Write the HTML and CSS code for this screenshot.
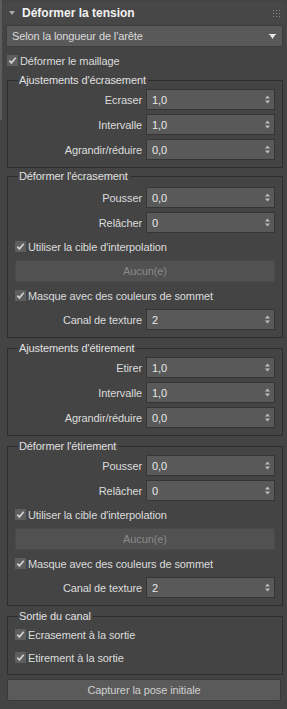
FILE: index.html
```html
<!DOCTYPE html>
<html lang="fr">
<head>
  <meta charset="UTF-8">
  <meta name="viewport" content="width=device-width, initial-scale=1.0">
  <title>Déformer la tension</title>
  <link rel="stylesheet" href="styles.css">
</head>
<body>
  <div class="scroll-thumb"></div>

  <div class="rollout-head">
    <svg class="caret" width="6" height="4" viewBox="0 0 6 4"><path d="M0 0H6L3 4Z"/></svg>
    <span class="rollout-title">Déformer la tension</span>
    <svg class="grip" width="7" height="7" viewBox="0 0 7 7">
      <rect x="0" y="0" width="1" height="1"/><rect x="3" y="0" width="1" height="1"/><rect x="6" y="0" width="1" height="1"/>
      <rect x="0" y="3" width="1" height="1"/><rect x="3" y="3" width="1" height="1"/><rect x="6" y="3" width="1" height="1"/>
      <rect x="0" y="6" width="1" height="1"/><rect x="3" y="6" width="1" height="1"/><rect x="6" y="6" width="1" height="1"/>
    </svg>
  </div>

  <div class="dropdown">
    <span>Selon la longueur de l'arête</span>
    <svg class="drop-arrow" width="7" height="5" viewBox="0 0 7 5"><path d="M0 0H7V1H6L3.5 5L1 1H0Z"/></svg>
  </div>

  <div class="check top-check">
    <svg class="box" width="11" height="11" viewBox="0 0 11 11"><rect width="11" height="11"/><path d="M2.3 5.6l2.1 2.3 4.3-5.2"/></svg>
    <span>Déformer le maillage</span>
  </div>

  <fieldset class="group">
    <legend>Ajustements d'écrasement</legend>
    <div class="field-row"><span class="field-label">Ecraser</span><div class="spinner"><span>1,0</span><svg class="spin" width="5" height="9" viewBox="0 0 5 9"><path d="M0 3.5L2.5 0.5L5 3.5ZM0 5.5H5L2.5 8.5Z"/></svg></div></div>
    <div class="field-row"><span class="field-label">Intervalle</span><div class="spinner"><span>1,0</span><svg class="spin" width="5" height="9" viewBox="0 0 5 9"><path d="M0 3.5L2.5 0.5L5 3.5ZM0 5.5H5L2.5 8.5Z"/></svg></div></div>
    <div class="field-row"><span class="field-label">Agrandir/réduire</span><div class="spinner"><span>0,0</span><svg class="spin" width="5" height="9" viewBox="0 0 5 9"><path d="M0 3.5L2.5 0.5L5 3.5ZM0 5.5H5L2.5 8.5Z"/></svg></div></div>
  </fieldset>

  <fieldset class="group group-tight">
    <legend>Déformer l'écrasement</legend>
    <div class="field-row"><span class="field-label">Pousser</span><div class="spinner"><span>0,0</span><svg class="spin" width="5" height="9" viewBox="0 0 5 9"><path d="M0 3.5L2.5 0.5L5 3.5ZM0 5.5H5L2.5 8.5Z"/></svg></div></div>
    <div class="field-row"><span class="field-label">Relâcher</span><div class="spinner"><span>0</span><svg class="spin" width="5" height="9" viewBox="0 0 5 9"><path d="M0 3.5L2.5 0.5L5 3.5ZM0 5.5H5L2.5 8.5Z"/></svg></div></div>
    <div class="check">
      <svg class="box" width="11" height="11" viewBox="0 0 11 11"><rect width="11" height="11"/><path d="M2.3 5.6l2.1 2.3 4.3-5.2"/></svg>
      <span>Utiliser la cible d'interpolation</span>
    </div>
    <button class="btn btn-disabled">Aucun(e)</button>
    <div class="check">
      <svg class="box" width="11" height="11" viewBox="0 0 11 11"><rect width="11" height="11"/><path d="M2.3 5.6l2.1 2.3 4.3-5.2"/></svg>
      <span>Masque avec des couleurs de sommet</span>
    </div>
    <div class="field-row"><span class="field-label">Canal de texture</span><div class="spinner"><span>2</span><svg class="spin" width="5" height="9" viewBox="0 0 5 9"><path d="M0 3.5L2.5 0.5L5 3.5ZM0 5.5H5L2.5 8.5Z"/></svg></div></div>
  </fieldset>

  <fieldset class="group">
    <legend>Ajustements d'étirement</legend>
    <div class="field-row"><span class="field-label">Etirer</span><div class="spinner"><span>1,0</span><svg class="spin" width="5" height="9" viewBox="0 0 5 9"><path d="M0 3.5L2.5 0.5L5 3.5ZM0 5.5H5L2.5 8.5Z"/></svg></div></div>
    <div class="field-row"><span class="field-label">Intervalle</span><div class="spinner"><span>1,0</span><svg class="spin" width="5" height="9" viewBox="0 0 5 9"><path d="M0 3.5L2.5 0.5L5 3.5ZM0 5.5H5L2.5 8.5Z"/></svg></div></div>
    <div class="field-row"><span class="field-label">Agrandir/réduire</span><div class="spinner"><span>0,0</span><svg class="spin" width="5" height="9" viewBox="0 0 5 9"><path d="M0 3.5L2.5 0.5L5 3.5ZM0 5.5H5L2.5 8.5Z"/></svg></div></div>
  </fieldset>

  <fieldset class="group">
    <legend>Déformer l'étirement</legend>
    <div class="field-row"><span class="field-label">Pousser</span><div class="spinner"><span>0,0</span><svg class="spin" width="5" height="9" viewBox="0 0 5 9"><path d="M0 3.5L2.5 0.5L5 3.5ZM0 5.5H5L2.5 8.5Z"/></svg></div></div>
    <div class="field-row"><span class="field-label">Relâcher</span><div class="spinner"><span>0</span><svg class="spin" width="5" height="9" viewBox="0 0 5 9"><path d="M0 3.5L2.5 0.5L5 3.5ZM0 5.5H5L2.5 8.5Z"/></svg></div></div>
    <div class="check">
      <svg class="box" width="11" height="11" viewBox="0 0 11 11"><rect width="11" height="11"/><path d="M2.3 5.6l2.1 2.3 4.3-5.2"/></svg>
      <span>Utiliser la cible d'interpolation</span>
    </div>
    <button class="btn btn-disabled">Aucun(e)</button>
    <div class="check">
      <svg class="box" width="11" height="11" viewBox="0 0 11 11"><rect width="11" height="11"/><path d="M2.3 5.6l2.1 2.3 4.3-5.2"/></svg>
      <span>Masque avec des couleurs de sommet</span>
    </div>
    <div class="field-row"><span class="field-label">Canal de texture</span><div class="spinner"><span>2</span><svg class="spin" width="5" height="9" viewBox="0 0 5 9"><path d="M0 3.5L2.5 0.5L5 3.5ZM0 5.5H5L2.5 8.5Z"/></svg></div></div>
  </fieldset>

  <fieldset class="group">
    <legend>Sortie du canal</legend>
    <div class="check">
      <svg class="box" width="11" height="11" viewBox="0 0 11 11"><rect width="11" height="11"/><path d="M2.3 5.6l2.1 2.3 4.3-5.2"/></svg>
      <span>Ecrasement à la sortie</span>
    </div>
    <div class="check">
      <svg class="box" width="11" height="11" viewBox="0 0 11 11"><rect width="11" height="11"/><path d="M2.3 5.6l2.1 2.3 4.3-5.2"/></svg>
      <span>Etirement à la sortie</span>
    </div>
  </fieldset>

  <button class="btn btn-capture">Capturer la pose initiale</button>
</body>
</html>
```

FILE: styles.css
```css
/* Base panel */
* {
  box-sizing: border-box;
}

body {
  margin: 0;
  height: 709px;
  overflow: hidden;
  position: relative;
  background: #444444;
  font-family: "Liberation Sans", Arial, sans-serif;
  font-size: 11px;
  letter-spacing: -0.1px;
  color: #dcdcdc;
}

/* Thin scrollbar thumb on the left edge */
.scroll-thumb {
  position: absolute;
  left: 0;
  top: 0;
  width: 2px;
  height: 120px;
  background: #5c5c5c;
}

/* Rollout header */
.rollout-head {
  display: flex;
  align-items: center;
  height: 22px;
  margin: 2px 2px 0 3px;
  padding-left: 6px;
  background: #474747;
}

.caret {
  fill: #a8a8a8;
}

.rollout-title {
  margin-left: 7px;
  font-size: 12px;
  font-weight: bold;
  letter-spacing: 0;
  color: #f2f2f2;
}

.grip {
  margin-left: auto;
  margin-right: 5px;
  fill: #8a8a8a;
}

/* Dropdown */
.dropdown {
  display: flex;
  align-items: center;
  height: 22px;
  margin: 1px 4px 0 6px;
  padding: 0 6px 0 5px;
  background: #595959;
  border: 1px solid #3c3c3c;
  color: #dadada;
}

.drop-arrow {
  margin-left: auto;
  fill: #e8e8e8;
}

/* Checkboxes */
.check {
  display: flex;
  align-items: center;
  height: 19px;
  gap: 2px;
}

.top-check {
  margin: 4px 0 0 7px;
}

.box rect {
  fill: #5e5e5e;
}

.box path {
  fill: none;
  stroke: #cfcfcf;
  stroke-width: 1.7;
}

/* Group boxes */
.group {
  display: flex;
  flex-direction: column;
  gap: 4px;
  margin: 3px 4px 0 7px;
  padding: 2px 7px 7px;
  border: 1px solid #2e2e2e;
  min-width: 0;
}

.group-tight {
  margin-top: 1px;
  padding-top: 4px;
}

.group legend {
  margin-left: 3px;
  padding: 0 2px 0 1px;
  line-height: 14px;
  color: #e0e0e0;
}

/* Label + spinner rows */
.field-row {
  display: grid;
  grid-template-columns: 1fr 129px;
  column-gap: 4px;
  align-items: center;
}

.field-label {
  text-align: right;
  white-space: nowrap;
}

.spinner {
  display: flex;
  align-items: center;
  height: 21px;
  padding: 0 4px 0 5px;
  background: #595959;
  border: 1px solid #353535;
  color: #e8e8e8;
}

.spin {
  margin-left: auto;
  fill: #bdbdbd;
}

/* Buttons */
.btn {
  display: block;
  height: 22px;
  font-family: inherit;
  font-size: 11px;
  letter-spacing: inherit;
  border-radius: 2px;
  padding: 0;
}

.btn-disabled {
  width: 100%;
  background: #515151;
  border: 1px solid #4a4a4a;
  color: #8a8a8a;
}

.btn-capture {
  width: 274px;
  margin: 4px 0 0 7px;
  background: #5a5a5a;
  border: 1px solid #3a3a3a;
  color: #cfcfcf;
}
```
